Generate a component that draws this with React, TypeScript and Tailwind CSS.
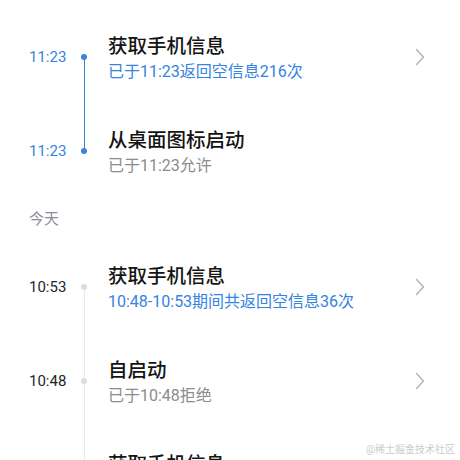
type Link = "none" | "blue" | "gray";

type Item = {
  time: string;
  title: string;
  sub: string;
  active: boolean;
  top: Link;
  bottom: Link;
  arrow: boolean;
};

const earlier: Item[] = [
  { time: "11:23", title: "获取手机信息", sub: "已于11:23返回空信息216次", active: true, top: "none", bottom: "blue", arrow: true },
  { time: "11:23", title: "从桌面图标启动", sub: "已于11:23允许", active: true, top: "blue", bottom: "none", arrow: false },
];

const today: Item[] = [
  { time: "10:53", title: "获取手机信息", sub: "10:48-10:53期间共返回空信息36次", active: false, top: "none", bottom: "gray", arrow: true },
  { time: "10:48", title: "自启动", sub: "已于10:48拒绝", active: false, top: "gray", bottom: "gray", arrow: true },
  { time: "10:45", title: "获取手机信息", sub: "已于10:45返回空信息12次", active: false, top: "gray", bottom: "gray", arrow: true },
];

function Segment({ kind }: { kind: Link }) {
  if (kind === "blue") return <div className="w-px flex-1 bg-[#3583e2]" />;
  if (kind === "gray") return <div className="w-px flex-1 bg-[#e8e8e8]" />;
  return <div className="w-px flex-1" />;
}

function Chevron() {
  return (
    <svg width="10" height="18" viewBox="0 0 10 18" fill="none">
      <polyline points="1.5,1.5 8.5,9 1.5,16.5" stroke="#b3b3b3" strokeWidth="1.4" strokeLinecap="round" strokeLinejoin="round" />
    </svg>
  );
}

function Row({ item }: { item: Item }) {
  const blueSub = item.arrow && (item.active || item.sub.includes("期间"));
  return (
    <div className="flex h-[94px] items-stretch pl-[29px] pr-[35px]">
      <div
        className={
          item.active
            ? "w-[50px] self-center text-[15px] text-[#3583e2]"
            : "w-[50px] self-center text-[15px] text-[#1f1f1f]"
        }
      >
        {item.time}
      </div>
      <div className="flex w-[10px] flex-col items-center">
        <Segment kind={item.top} />
        <div className={item.active ? "h-1.5 w-1.5 rounded-full bg-[#3583e2]" : "h-1.5 w-1.5 rounded-full bg-[#dcdcdc]"} />
        <Segment kind={item.bottom} />
      </div>
      <div className="ml-[19px] flex min-w-0 flex-1 flex-col justify-center pt-[4px]">
        <div className="text-[19.5px] leading-[26px] font-medium text-[#141414]">{item.title}</div>
        <div
          className={
            blueSub
              ? "text-[16px] leading-[24px] text-[#3583e2]"
              : "text-[16px] leading-[24px] text-[#8c8c8c]"
          }
        >
          {item.sub}
        </div>
      </div>
      {item.arrow && (
        <div className="flex items-center">
          <Chevron />
        </div>
      )}
    </div>
  );
}

export default function App() {
  return (
    <div
      className="relative h-[460px] w-[460px] overflow-hidden bg-white"
      style={{ fontFamily: 'Roboto, "Noto Sans CJK SC", sans-serif' }}
    >
      <div className="pt-[10px]">
        {earlier.map((item, i) => (
          <Row key={i} item={item} />
        ))}
        <div className="flex h-[42px] items-center pl-[29px] text-[15px] text-[#8a8d99]">今天</div>
        {today.map((item, i) => (
          <Row key={i} item={item} />
        ))}
      </div>
      <div className="absolute right-[5px] bottom-[3px] text-[10px] text-[#cccccc]">@稀土掘金技术社区</div>
    </div>
  );
}
